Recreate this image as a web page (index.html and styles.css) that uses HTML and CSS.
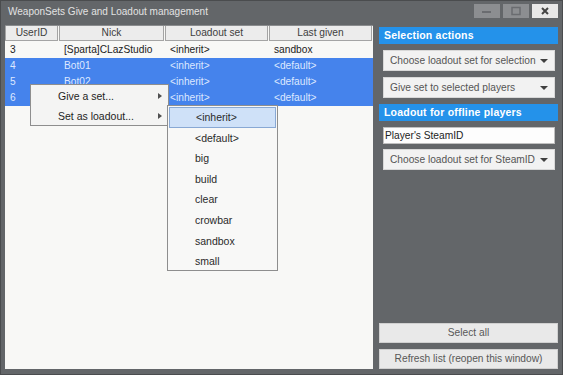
FILE: index.html
```html
<!DOCTYPE html>
<html>
<head>
<meta charset="utf-8">
<link rel="stylesheet" href="styles.css">
</head>
<body>
<div class="window">
  <div class="titlebar">
    <span class="title">WeaponSets Give and Loadout management</span>
    <div class="wbtns">
      <span class="wbtn dim"><svg width="12" height="6" viewBox="0 0 12 6"><rect x="1" y="3" width="9" height="2" fill="#6a6c70"/></svg></span>
      <span class="wbtn dim"><svg width="12" height="10" viewBox="0 0 12 10"><rect x="2" y="1.5" width="8" height="7" fill="none" stroke="#6a6c70" stroke-width="1.5"/></svg></span>
      <span class="wbtn close"><svg width="10" height="10" viewBox="0 0 10 10"><path d="M2 2 L8 8 M8 2 L2 8" stroke="#444" stroke-width="2"/></svg></span>
    </div>
  </div>
  <div class="content">
    <div class="list">
      <div class="row head">
        <div class="hcell">UserID</div>
        <div class="hcell">Nick</div>
        <div class="hcell">Loadout set</div>
        <div class="hcell">Last given</div>
      </div>
      <div class="row">
        <div class="cell">3</div>
        <div class="cell">[Sparta]CLazStudio</div>
        <div class="cell">&lt;inherit&gt;</div>
        <div class="cell">sandbox</div>
      </div>
      <div class="row sel">
        <div class="cell">4</div>
        <div class="cell">Bot01</div>
        <div class="cell">&lt;inherit&gt;</div>
        <div class="cell">&lt;default&gt;</div>
      </div>
      <div class="row sel">
        <div class="cell">5</div>
        <div class="cell">Bot02</div>
        <div class="cell">&lt;inherit&gt;</div>
        <div class="cell">&lt;default&gt;</div>
      </div>
      <div class="row sel">
        <div class="cell">6</div>
        <div class="cell">Bot03</div>
        <div class="cell">&lt;inherit&gt;</div>
        <div class="cell">&lt;default&gt;</div>
      </div>
    </div>
    <div class="side">
      <div class="shead">Selection actions</div>
      <div class="combo"><span>Choose loadout set for selection</span><span class="arrow"></span></div>
      <div class="combo"><span>Give set to selected players</span><span class="arrow"></span></div>
      <div class="shead">Loadout for offline players</div>
      <div class="field">Player's SteamID</div>
      <div class="combo"><span>Choose loadout set for SteamID</span><span class="arrow"></span></div>
      <div class="spacer"></div>
      <div class="btn">Select all</div>
      <div class="btn">Refresh list (reopen this window)</div>
    </div>
  </div>
  <div class="menu">
    <div class="mitem"><span>Give a set...</span><span class="rarrow"></span></div>
    <div class="mitem"><span>Set as loadout...</span><span class="rarrow"></span></div>
  </div>
  <div class="submenu">
    <div class="sitem hl">&lt;inherit&gt;</div>
    <div class="sitem">&lt;default&gt;</div>
    <div class="sitem">big</div>
    <div class="sitem">build</div>
    <div class="sitem">clear</div>
    <div class="sitem">crowbar</div>
    <div class="sitem">sandbox</div>
    <div class="sitem">small</div>
  </div>
</div>
</body>
</html>
```
FILE: styles.css
```css
* { box-sizing: border-box; }
html, body { margin: 0; padding: 0; }
body {
  width: 563px;
  height: 375px;
  overflow: hidden;
  background: #5e6164;
  font-family: "Liberation Sans", sans-serif;
  font-size: 10.2px;
}
.window {
  position: relative;
  width: 563px;
  height: 375px;
  background: #636669;
  border: 1px solid #4a4c4e;
  display: flex;
  flex-direction: column;
}
.titlebar {
  height: 24px;
  display: flex;
  align-items: flex-start;
  justify-content: space-between;
  padding: 0 4px 0 7px;
}
.title {
  color: #e2e2e2;
  font-size: 10px;
  line-height: 22px;
}
.wbtns {
  display: flex;
  gap: 3px;
  padding-top: 3px;
}
.wbtn {
  width: 26px;
  height: 14px;
  display: flex;
  align-items: center;
  justify-content: center;
}
.wbtn.dim { background: #8c8e91; }
.wbtn.close { background: #e8e8e8; }
.content {
  flex: 1;
  display: flex;
  gap: 6px;
  padding: 0 4px 5px 4px;
}
.list {
  width: 368px;
  background: #f8f8f6;
  border-top: 1px solid #8a8c8e;
  display: flex;
  flex-direction: column;
}
.row {
  display: grid;
  grid-template-columns: 54px 106px 104px 1fr;
  height: 16px;
  align-items: center;
  color: #1c1c1c;
  font-size: 10.2px;
}
.row.head {
  height: 15px;
  margin-bottom: 1px;
}
.hcell {
  height: 15px;
  background: #ececec;
  border: 1px solid #a4a4a4;
  border-top: none;
  margin-right: 1px;
  text-align: center;
  line-height: 13px;
  color: #404040;
}
.cell {
  padding-left: 5px;
  white-space: nowrap;
  line-height: 16px;
}
.row.sel {
  background: #4583ec;
  color: #dde8ff;
}
.side {
  width: 179px;
  display: flex;
  flex-direction: column;
  padding-top: 2px;
}
.shead {
  height: 17px;
  background: #2492ea;
  color: #ffffff;
  font-weight: bold;
  font-size: 10.5px;
  line-height: 17px;
  padding-left: 5px;
  margin-bottom: 6px;
  white-space: nowrap;
  letter-spacing: 0.2px;
}
.combo {
  height: 21px;
  margin: 0 3px 6px 4px;
  background: #f2f2f2;
  border: 1px solid #d8d8d8;
  display: flex;
  align-items: center;
  justify-content: space-between;
  padding: 0 6px 0 6px;
  color: #555;
  white-space: nowrap;
}
.arrow {
  width: 0;
  height: 0;
  border-left: 4px solid transparent;
  border-right: 4px solid transparent;
  border-top: 4px solid #404040;
}
.field {
  height: 17px;
  margin: 0 3px 5px 4px;
  background: #fdfdfd;
  border: 1px solid #c0c0c0;
  padding-left: 1px;
  line-height: 15px;
  color: #222;
  white-space: nowrap;
}
.spacer { flex: 1; }
.btn {
  height: 20px;
  margin-top: 6px;
  background: #e9e9e9;
  border: 1px solid #d0d0d0;
  text-align: center;
  line-height: 18px;
  color: #585858;
  white-space: nowrap;
}
.menu {
  position: absolute;
  left: 29px;
  top: 83px;
  width: 139px;
  height: 42px;
  background: #f4f4f3;
  border: 1px solid #8e8e8e;
  padding-top: 1px;
}
.mitem {
  height: 20px;
  display: flex;
  align-items: center;
  justify-content: space-between;
  padding: 0 6px 0 27px;
  color: #1e1e1e;
  font-size: 10.5px;
}
.rarrow {
  width: 0;
  height: 0;
  border-top: 3px solid transparent;
  border-bottom: 3px solid transparent;
  border-left: 4px solid #505050;
}
.submenu {
  position: absolute;
  left: 166px;
  top: 104px;
  width: 111px;
  height: 166px;
  background: #f8f8f7;
  border: 1px solid #8e8e8e;
  padding: 1px;
}
.sitem {
  height: 20.6px;
  line-height: 20.6px;
  padding-left: 26px;
  color: #2a2a2a;
  font-size: 10.5px;
}
.sitem.hl {
  background: #cfe1f8;
  border: 1px solid #88a8d4;
  line-height: 18.6px;
}
```
